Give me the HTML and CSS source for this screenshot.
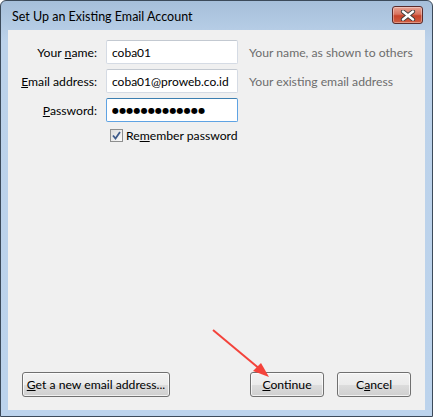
FILE: index.html
```html
<!DOCTYPE html>
<html lang="en">
<head>
  <meta charset="UTF-8">
  <title>Set Up an Existing Email Account</title>
  <link rel="stylesheet" href="styles.css">
</head>
<body>
  <div class="window">
    <div class="titlebar">
      <span class="title">Set Up an Existing Email Account</span>
      <span class="close-btn">
        <svg width="16" height="11" viewBox="0 0 16 11">
          <path d="M3 1.5 L13 9.5 M13 1.5 L3 9.5" stroke="#3a3a3a" stroke-width="4.2" stroke-linecap="round"/>
          <path d="M3 1.5 L13 9.5 M13 1.5 L3 9.5" stroke="#fff" stroke-width="2.4" stroke-linecap="round"/>
        </svg>
      </span>
    </div>
    <div class="client">
      <div class="form">
        <label for="name">Your <u>n</u>ame:</label>
        <input type="text" id="name" value="coba01">
        <span class="hint">Your name, as shown to others</span>

        <label for="email"><u>E</u>mail address:</label>
        <input type="text" id="email" value="coba01@proweb.co.id">
        <span class="hint">Your existing email address</span>

        <label for="password"><u>P</u>assword:</label>
        <input type="text" id="password" class="focused" value="●●●●●●●●●●●●●" readonly>
        <span class="hint"></span>

        <span></span>
        <label class="remember">
          <span class="checkbox">
            <svg width="9" height="9" viewBox="0 0 9 9">
              <path d="M1 4.5 L3.5 7.5 L8 1" fill="none" stroke="#3d5a8a" stroke-width="1.8"/>
            </svg>
          </span>
          <span>Re<u>m</u>ember password</span>
        </label>
      </div>

      <div class="buttons">
        <button class="btn btn-wide"><u>G</u>et a new email address...</button>
        <div class="right-buttons">
          <button class="btn"><u>C</u>ontinue</button>
          <button class="btn">C<u>a</u>ncel</button>
        </div>
      </div>

      <svg class="arrow" width="70" height="60" viewBox="0 0 70 60">
        <line x1="4" y1="2" x2="52" y2="42" stroke="#f4433b" stroke-width="2"/>
        <polygon points="60,49 44,43 52,35" fill="#f4433b"/>
      </svg>
    </div>
  </div>
</body>
</html>
```

FILE: styles.css
```css
body {
  margin: 0;
  font-family: Lato, "Open Sans", sans-serif;
  font-size: 12px;
  color: #000;
}
.window {
  width: 433px;
  height: 417px;
  box-sizing: border-box;
  border: 1px solid #3c4a5a;
  border-radius: 6px 6px 0 0;
  background: linear-gradient(to bottom, #a6bfda 0px, #bcd2ea 40px, #bcd3ec 100%);
  display: flex;
  flex-direction: column;
  position: relative;
}
.titlebar {
  height: 29px;
  display: flex;
  align-items: center;
  justify-content: space-between;
  padding: 0 9px 0 11px;
}
.title {
  font-size: 12.5px;
  padding-top: 2px;
}
.close-btn {
  width: 29px;
  height: 16px;
  margin-top: -1px;
  border: 1px solid #5a2a2a;
  border-radius: 3px;
  background: linear-gradient(to bottom, #e8a293 0%, #d8735f 45%, #c7432a 55%, #cf5e42 100%);
  box-shadow: inset 0 0 0 1px rgba(255, 255, 255, 0.35);
  display: flex;
  align-items: center;
  justify-content: center;
}
.client {
  flex: 1;
  margin: 0 7px 6px 7px;
  background-color: #f0f0f0;
  display: flex;
  flex-direction: column;
  justify-content: space-between;
  position: relative;
}
.form {
  display: grid;
  grid-template-columns: 89px 132px auto;
  column-gap: 9px;
  row-gap: 5px;
  padding-top: 10px;
  align-items: center;
  font-size: 12.2px;
}
.form label {
  text-align: right;
}
.form input {
  box-sizing: border-box;
  height: 24px;
  width: 132px;
  border: 1px solid #d5dbe4;
  border-top-color: #c3c9d1;
  border-radius: 2px;
  padding: 0 4px 0 5px;
  font-family: inherit;
  font-size: 12px;
  background-color: #fff;
  outline: none;
}
.form input.focused {
  border-color: #5fa3e3;
  border-top-color: #3c7fb1;
  font-family: "DejaVu Sans", sans-serif;
  font-size: 8px;
  letter-spacing: 0.2px;
  padding-left: 5px;
}
.hint {
  color: #6d6d6d;
  margin-left: 2px;
}
.form .remember {
  grid-column: 2 / 4;
  text-align: left;
  display: flex;
  align-items: center;
  gap: 3px;
  margin-left: 4px;
  margin-top: 1px;
}
.checkbox {
  width: 11px;
  height: 11px;
  border: 1px solid #8e8f8f;
  background: linear-gradient(to bottom right, #dcdcdc, #fbfbfb);
  display: flex;
  align-items: center;
  justify-content: center;
}
.buttons {
  display: flex;
  justify-content: space-between;
  padding: 0 14px 13px 14px;
}
.right-buttons {
  display: flex;
  gap: 13px;
}
.btn {
  height: 25px;
  width: 74px;
  border: 1px solid #707070;
  border-radius: 3px;
  background: linear-gradient(to bottom, #f2f2f2 0%, #ebebeb 50%, #dddddd 51%, #cfcfcf 100%);
  box-shadow: inset 0 0 0 1px rgba(255, 255, 255, 0.7);
  font-family: inherit;
  font-size: 12.2px;
  color: #000;
  padding: 0;
  white-space: nowrap;
}
.btn-wide {
  width: 148px;
}
.arrow {
  position: absolute;
  left: 201px;
  top: 298px;
}
```
